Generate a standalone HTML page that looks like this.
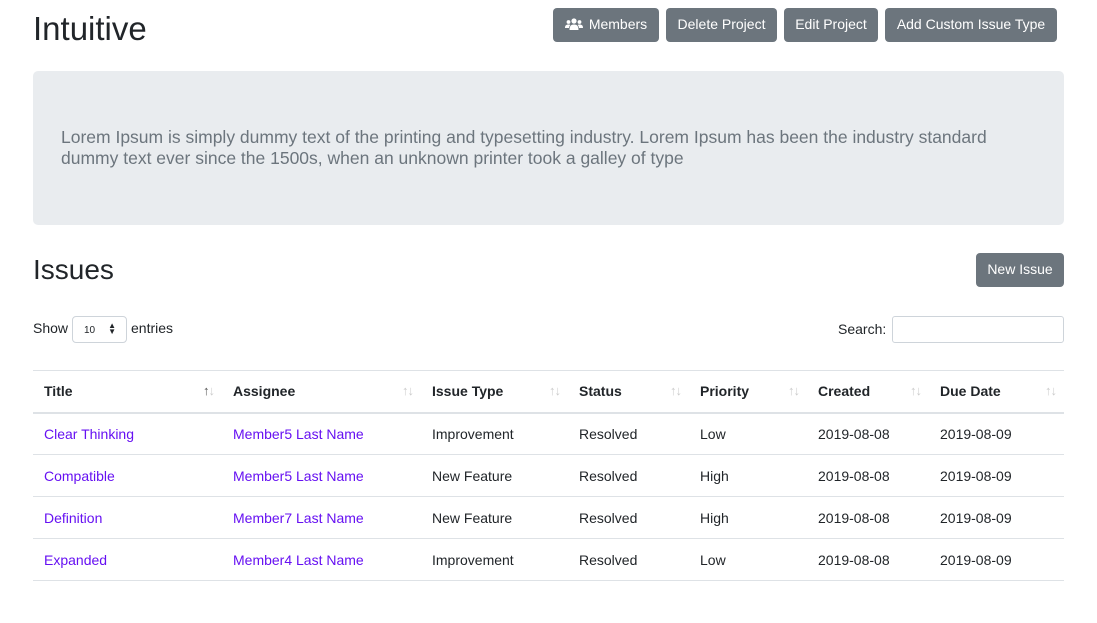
<!DOCTYPE html>
<html><head><meta charset="utf-8"><style>
*{box-sizing:border-box}
body{margin:0;width:1097px;height:587px;overflow:hidden;background:#fff;font-family:"Liberation Sans",sans-serif;color:#212529;font-size:14px;position:relative}
.a{position:absolute}
h1{position:absolute;left:33px;top:10px;margin:0;font-weight:400;font-size:33px;color:#212529}
.btn{position:absolute;top:8px;height:34px;background:#6c757d;color:#fff;border-radius:4px;font-size:14px;line-height:33px;text-align:center}
.jum{position:absolute;left:33px;top:71px;width:1031px;height:154px;background:#e9ecef;border-radius:5px}
.jum p{position:absolute;left:28px;top:56px;margin:0;font-size:17.5px;line-height:21px;color:#6c757d;width:960px}
table{position:absolute;left:33px;top:370px;width:1031px;border-collapse:collapse;font-size:14px}
th,td{text-align:left;padding:0 11px;height:42px;border-top:1px solid #dee2e6;position:relative}
th{border-bottom:2px solid #dee2e6;font-weight:bold;height:42px}
th span{position:absolute;right:8px;top:12px;font-size:13px;color:#ccc;font-weight:normal;letter-spacing:-1px}
td a{color:#6610f2}
</style></head><body>
<h1>Intuitive</h1>
<div class="btn" style="left:553px;width:106px"><svg width="18" height="12" viewBox="0 0 18 12" style="vertical-align:-1px;margin-right:6px"><circle cx="9" cy="3" r="2.6" fill="#fff"/><circle cx="3.5" cy="4" r="1.9" fill="#fff"/><circle cx="14.5" cy="4" r="1.9" fill="#fff"/><path d="M4.5 12c0-4 1.5-5.5 4.5-5.5s4.5 1.5 4.5 5.5z M0 10c0-2.5 1-3.5 3.5-3.5 1 0 1.5.3 1.8.6-.8.8-1.3 1.8-1.3 2.9z M18 10c0-2.5-1-3.5-3.5-3.5-1 0-1.5.3-1.8.6.8.8 1.3 1.8 1.3 2.9z" fill="#fff"/></svg>Members</div>
<div class="btn" style="left:666px;width:111px">Delete Project</div>
<div class="btn" style="left:784px;width:94px">Edit Project</div>
<div class="btn" style="left:885px;width:172px">Add Custom Issue Type</div>
<div class="jum"><p>Lorem Ipsum is simply dummy text of the printing and typesetting industry. Lorem Ipsum has been the industry standard dummy text ever since the 1500s, when an unknown printer took a galley of type</p></div>
<div class="a" style="left:33px;top:254px;font-size:28px">Issues</div>
<div class="btn" style="left:976px;top:253px;width:88px">New Issue</div>
<div class="a" style="left:33px;top:320px">Show</div>
<div class="a" style="left:72px;top:316px;width:55px;height:27px;border:1px solid #ced4da;border-radius:4px;font-size:10px;padding:8px 0 0 11px">10<span style="position:absolute;right:10px;top:6px;font-size:8px;line-height:6px">▲<br>▼</span></div>
<div class="a" style="left:131px;top:320px">entries</div>
<div class="a" style="left:838px;top:321px">Search:</div>
<div class="a" style="left:892px;top:316px;width:172px;height:27px;border:1px solid #ced4da;border-radius:3px"></div>
<table>
<colgroup><col style="width:189px"><col style="width:199px"><col style="width:147px"><col style="width:121px"><col style="width:118px"><col style="width:122px"><col></colgroup>
<tr><th>Title<span style="color:#555">↑<b style="color:#ccc;font-weight:normal">↓</b></span></th><th>Assignee<span>↑↓</span></th><th>Issue Type<span>↑↓</span></th><th>Status<span>↑↓</span></th><th>Priority<span>↑↓</span></th><th>Created<span>↑↓</span></th><th>Due Date<span>↑↓</span></th></tr>
<tr><td><a>Clear Thinking</a></td><td><a>Member5 Last Name</a></td><td>Improvement</td><td>Resolved</td><td>Low</td><td>2019-08-08</td><td>2019-08-09</td></tr>
<tr><td><a>Compatible</a></td><td><a>Member5 Last Name</a></td><td>New Feature</td><td>Resolved</td><td>High</td><td>2019-08-08</td><td>2019-08-09</td></tr>
<tr><td><a>Definition</a></td><td><a>Member7 Last Name</a></td><td>New Feature</td><td>Resolved</td><td>High</td><td>2019-08-08</td><td>2019-08-09</td></tr>
<tr><td><a>Expanded</a></td><td><a>Member4 Last Name</a></td><td>Improvement</td><td>Resolved</td><td>Low</td><td>2019-08-08</td><td>2019-08-09</td></tr>
<tr><td></td><td></td><td></td><td></td><td></td><td></td><td></td></tr>
</table>
</body></html>
